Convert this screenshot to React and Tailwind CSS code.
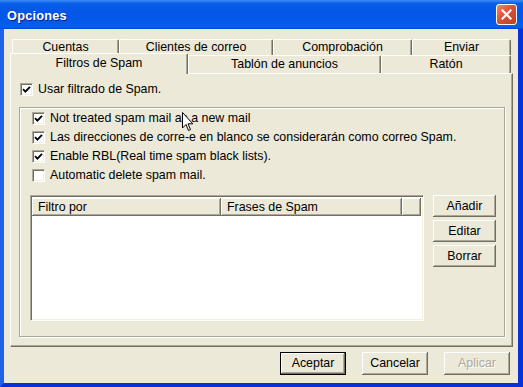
import React from "react";

const raised =
  "shadow-[inset_-1px_-1px_#716F64,inset_1px_1px_#ffffff,inset_-2px_-2px_#ACA899]";

function Check({ checked }) {
  return (
    <span className="w-[13px] h-[13px] shrink-0 bg-white border border-t-[#ACA899] border-l-[#ACA899] border-b-white border-r-white shadow-[inset_1px_1px_#716F64,inset_-1px_-1px_#F1EFE2] flex items-center justify-center">
      {checked && (
        <svg width="9" height="9" viewBox="0 0 9 9">
          <path d="M1 4.2 L3.4 6.6 L8 1.8" fill="none" stroke="#000" strokeWidth="1.9" />
        </svg>
      )}
    </span>
  );
}

function Button({ children, isDefault, disabled, className = "" }) {
  return (
    <div
      className={`flex items-center justify-center bg-[#ECE9D8] ${raised} ${
        isDefault ? "outline outline-1 outline-black -outline-offset-1 shadow-[inset_-2px_-2px_#716F64,inset_2px_2px_#ffffff,inset_-3px_-3px_#ACA899]" : ""
      } ${disabled ? "text-[#ACA899] [text-shadow:1px_1px_#fff]" : "text-black"} ${className}`}
    >
      {children}
    </div>
  );
}

function Tab({ children, w, selected }) {
  return (
    <div
      style={{ width: w }}
      className={`flex items-center justify-center bg-[#ECE9D8] border-t border-l border-white border-r border-r-[#716F64] shadow-[inset_-1px_0_#ACA899] rounded-t-[2px] ${
        selected ? "relative z-10 h-[21px] -mt-[2px] -mb-[1px] -ml-[2px] pb-[2px]" : "h-full"
      }`}
    >
      {children}
    </div>
  );
}

function Cursor() {
  return (
    <svg className="absolute left-[182px] top-[112px]" width="12" height="20" viewBox="0 0 12 20">
      <path d="M0.5 0.5 L0.5 16 L4 12.5 L6.5 18.5 L8.5 17.6 L6 11.8 L10.8 11.8 Z" fill="#fff" stroke="#000" strokeWidth="1" strokeLinejoin="miter" />
    </svg>
  );
}

export default function App() {
  const rows = [
    ["Not treated spam mail as a new mail", true],
    ["Las direcciones de corre-e en blanco se considerarán como correo Spam.", true],
    ["Enable RBL(Real time spam black lists).", true],
    ["Automatic delete spam mail.", false],
  ];
  return (
    <div className="relative w-[523px] h-[387px] flex flex-col font-['Liberation_Sans',Arial,sans-serif] text-[12.4px] text-black bg-[#0831D9] overflow-hidden">
      {/* title bar */}
      <div className="h-[29px] shrink-0 flex items-center justify-between pl-[7px] pr-[6px] bg-[linear-gradient(180deg,#3C8CF8_0%,#0A5FE8_12%,#0356E6_45%,#0559EC_80%,#0A5FF0_92%,#0048D8_100%)]">
        <span className="text-white font-bold text-[12.8px] tracking-[0.2px] mt-[2px] [text-shadow:1px_1px_#0A1E8C]">Opciones</span>
        <div className="w-[21px] h-[21px] rounded-[3px] border border-white bg-[linear-gradient(135deg,#EE8A6E_0%,#D9533A_45%,#C23E22_100%)] flex items-center justify-center">
          <svg width="11" height="11" viewBox="0 0 11 11">
            <path d="M1.5 1.5 L9.5 9.5 M9.5 1.5 L1.5 9.5" stroke="#fff" strokeWidth="2.2" strokeLinecap="square" />
          </svg>
        </div>
      </div>

      {/* body */}
      <div className="flex-1 flex flex-col bg-[#ECE9D8] border-l-4 border-l-[#1E62E8] border-r-[5px] border-r-[#0831D9] border-b-4 border-b-[#0831D9] pt-[10px] pl-[6px]">
        {/* tabs */}
        <div className="w-[503px] flex flex-col">
          <div className="h-[16px] flex pl-[2px]">
            <Tab w={107}>Cuentas</Tab>
            <Tab w={154}>Clientes de correo</Tab>
            <Tab w={139}>Comprobación</Tab>
            <Tab w={99}>Enviar</Tab>
          </div>
          <div className="h-[18px] flex pl-[2px]">
            <Tab w={178} selected>Filtros de Spam</Tab>
            <Tab w={193}>Tablón de anuncios</Tab>
            <Tab w={130}>Ratón</Tab>
          </div>

          {/* panel */}
          <div className="h-[274px] border-t border-l border-white border-r border-b border-r-[#716F64] border-b-[#716F64] shadow-[inset_-1px_-1px_#ACA899] pl-[8px] pt-[8px] flex flex-col">
            <div className="flex items-center gap-[5px] h-[15px] ml-[1px]">
              <Check checked />
              <span>Usar filtrado de Spam.</span>
            </div>

            {/* group box */}
            <div className="mt-[10px] w-[486px] h-[230px] border border-[#ACA899] shadow-[inset_1px_1px_#fff,1px_1px_#fff] pl-[12px] pt-[1px] flex flex-col">
              {rows.map(([label, checked]) => (
                <div key={label} className="h-[19px] flex items-center gap-[5px]">
                  <Check checked={checked} />
                  <span>{label}</span>
                </div>
              ))}

              <div className="mt-[10px] -ml-[2px] flex gap-[9px]">
                {/* list view */}
                <div className="w-[394px] h-[126px] bg-white border border-t-[#ACA899] border-l-[#ACA899] border-b-white border-r-white shadow-[inset_1px_1px_#716F64,inset_-1px_-1px_#F1EFE2] p-[2px] pl-[1px] flex flex-col">
                  <div className="h-[18px] flex">
                    <div className={`w-[189px] flex items-center pl-[6px] bg-[#ECE9D8] ${raised}`}>Filtro por</div>
                    <div className={`w-[181px] flex items-center pl-[6px] bg-[#ECE9D8] ${raised}`}>Frases de Spam</div>
                    <div className={`flex-1 bg-[#ECE9D8] ${raised}`}></div>
                  </div>
                </div>

                <div className="flex flex-col gap-[3px]">
                  <Button className="w-[63px] h-[22px]">Añadir</Button>
                  <Button className="w-[63px] h-[22px]">Editar</Button>
                  <Button className="w-[63px] h-[22px]">Borrar</Button>
                </div>
              </div>
            </div>
          </div>
        </div>

        {/* bottom buttons */}
        <div className="mt-[5px] flex gap-[16px] pl-[270px]">
          <Button isDefault className="w-[66px] h-[23px]">Aceptar</Button>
          <Button className="w-[66px] h-[23px]">Cancelar</Button>
          <Button disabled className="w-[66px] h-[23px]">Aplicar</Button>
        </div>
      </div>

      <Cursor />
    </div>
  );
}
